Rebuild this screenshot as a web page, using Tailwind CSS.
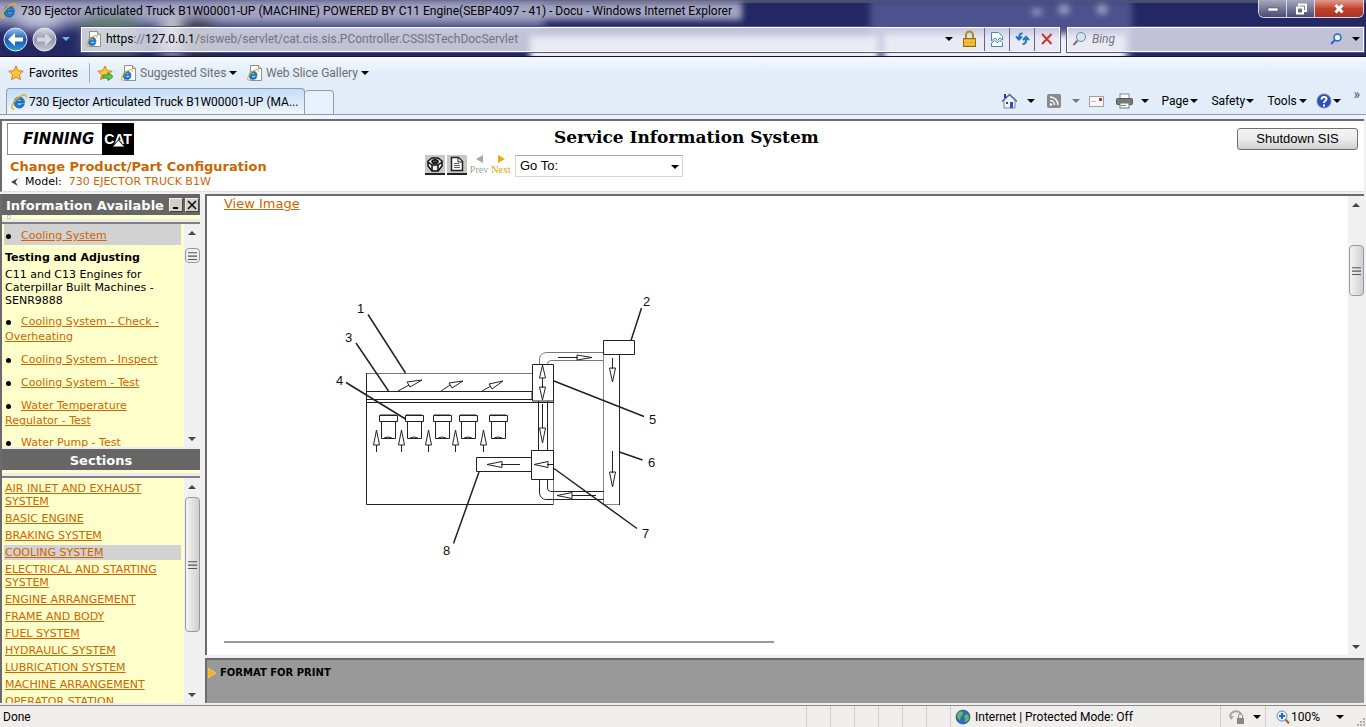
<!DOCTYPE html>
<html lang="en">
  <head>
    <meta charset="UTF-8" />
    <meta name="viewport" content="width=device-width, initial-scale=1.0" />
    <title>730 Ejector Articulated Truck - Service Information System</title>
    <script src="https://cdn.jsdelivr.net/npm/@tailwindcss/browser@4"></script>
  </head>
  <body class="h-screen flex flex-col overflow-hidden bg-[#f0f0f0] font-['Roboto',sans-serif] text-[12px] leading-4 text-black">
    <!-- Shared icons -->
    <svg class="hidden">
      <symbol id="ie" viewBox="0 0 16 16">
        <path d="M13.4 9H6.1c.2 1.500 1.200 2.300 2.500 2.300.9 0 1.600-.4 2-1.100h2.600C12.500 12.600 10.700 14 8.400 14 5.300 14 3 11.600 3 8.500S5.300 3 8.400 3s5.200 2.500 5 6zM6.200 7.300h4.400C10.400 6.100 9.600 5.400 8.400 5.400S6.400 6.100 6.200 7.300z" fill="#1c7fd0" stroke="#0d57a5" stroke-width=".8" />
        <path d="M3.200 15C1 15.500.2 13.500 1.500 10.500 3 7 7.500 2.500 12 1c2.500-.8 3.600.4 2.800 2.600" fill="none" stroke="#e8b020" stroke-width="1.500" />
      </symbol>
      <symbol id="ie-page" viewBox="0 0 16 16">
        <path d="M3.500.5h8l3 3v12h-11z" fill="#fff" stroke="#8a8f98" />
        <path d="M11.500.5v3h3" fill="#dde" stroke="#8a8f98" />
        <use href="#ie" x="0" y="4" width="12" height="12" />
      </symbol>
      <symbol id="star" viewBox="0 0 16 16">
        <path d="M8 1l2.100 4.700 5.100.5-3.800 3.500 1.100 5L8 12.100l-4.500 2.600 1.100-5L.8 6.200l5.100-.5z" fill="#fcc73a" stroke="#d58112" />
      </symbol>
      <symbol id="caret" viewBox="0 0 8 4">
        <path d="M0 0h8L4 4z" fill="currentColor" />
      </symbol>
      <symbol id="grip" viewBox="0 0 8 8">
        <path d="M0 1.500h8M0 4.500h8M0 7.500h8" stroke="#555" />
      </symbol>
      <symbol id="up" viewBox="0 0 8 4">
        <path d="M0 4L4 0l4 4z" fill="#444" />
      </symbol>
      <symbol id="down" viewBox="0 0 8 4">
        <path d="M0 0h8L4 4z" fill="#444" />
      </symbol>
    </svg>

    <!-- Window frame: title bar and address bar -->
    <header class="relative h-[57px] shrink-0 overflow-hidden bg-[#232865] border-b border-[#14142c]">
      <div class="absolute inset-0">
        <div class="absolute left-0 top-0 w-full h-[3px] bg-[#4b4f6c]"></div>
        <div class="absolute -left-4 top-[2px] w-[560px] h-[26px] bg-[#7074a4] blur-[4px]"></div>
        <div class="absolute -left-4 top-[2px] w-[758px] h-[18px] bg-[#a4a4c2] blur-[3px]"></div>
        <div class="absolute left-[20px] top-[14px] w-[40px] h-[14px] bg-[#d8d8e8] blur-sm"></div>
        <div class="absolute left-[84px] top-[18px] w-[52px] h-[36px] bg-[#5d7d68] blur-sm"></div>
        <div class="absolute left-[162px] top-[18px] w-[22px] h-[36px] bg-[#e5e5e5] blur-sm"></div>
        <div class="absolute left-[184px] top-[22px] w-[26px] h-[34px] bg-[#33332f] blur-sm"></div>
        <div class="absolute left-[870px] top-0 w-[262px] h-[60px] bg-[#4c528c] blur-[3px]"></div>
        <div class="absolute left-[530px] top-[36px] w-[348px] h-[26px] bg-[#eeeef6] blur-[3px]"></div>
        <div class="absolute left-[884px] top-[34px] w-[242px] h-[30px] bg-[#eeeef6] blur-[3px]"></div>
        <div class="absolute left-[1032px] top-[9px] w-[10px] h-[6px] bg-[#9ba0c6] blur-[3px]"></div>
        <div class="absolute left-[1059px] top-[5px] w-[10px] h-[9px] bg-[#9ba0c6] blur-[3px]"></div>
        <div class="absolute left-[1097px] top-[5px] w-[10px] h-[9px] bg-[#9ba0c6] blur-[3px]"></div>
      </div>

      <div class="relative flex h-[22px] items-center gap-1 pl-[1px] pr-[2px]">
        <svg class="size-4 shrink-0"><use href="#ie" /></svg>
        <h1 class="flex-1 whitespace-nowrap">730 Ejector Articulated Truck B1W00001-UP (MACHINE) POWERED BY C11 Engine(SEBP4097 - 41) - Docu - Windows Internet Explorer</h1>
        <div class="flex self-start h-[18px] rounded-b-md border border-t-0 border-[#d8d8e6] overflow-hidden">
          <button aria-label="Minimize" class="w-7 flex items-center justify-center border-r border-[#d8d8e6] bg-linear-to-b from-[#a8a8be] to-[#4a4c70]">
            <svg class="w-3 h-2"><rect x="1" y="3" width="10" height="3" fill="#fff" stroke="#444" stroke-width=".5" /></svg>
          </button>
          <button aria-label="Restore" class="w-7 flex items-center justify-center border-r border-[#d8d8e6] bg-linear-to-b from-[#a8a8be] to-[#4a4c70]">
            <svg class="size-3" fill="none" stroke="#fff" stroke-width="2"><path d="M4 3V1.500h7V8H9" /><rect x="2" y="4.500" width="6" height="6" /></svg>
          </button>
          <button aria-label="Close" class="w-12 flex items-center justify-center bg-linear-to-b from-[#dc9a90] via-[#c5402c] to-[#a83324]">
            <svg class="size-3"><path d="M2.500 2l7 7.500M9.500 2l-7 7.500" stroke="#fff" stroke-width="3" /></svg>
          </button>
        </div>
      </div>

      <div class="relative flex h-[34px] items-center pl-[3px] pr-[2px]">
        <button aria-label="Back">
          <svg class="size-[25px]">
            <defs>
              <linearGradient id="blue" x2="0" y2="1"><stop stop-color="#9cc4ee" /><stop offset=".5" stop-color="#1c58b0" /><stop offset="1" stop-color="#2a9be8" /></linearGradient>
              <linearGradient id="silver" x2="0" y2="1"><stop stop-color="#dcdce6" /><stop offset=".5" stop-color="#9496aa" /><stop offset="1" stop-color="#c8cad6" /></linearGradient>
            </defs>
            <circle cx="12.500" cy="12.500" r="11.500" fill="url(#blue)" stroke="#dfe6f4" />
            <path d="M5 12.500L12 6v4.500h8v4h-8V19z" fill="#fff" />
          </svg>
        </button>
        <button aria-label="Forward" class="ml-1">
          <svg class="size-[25px]">
            <circle cx="12.500" cy="12.500" r="11.500" fill="url(#silver)" stroke="#e2e2ec" />
            <path d="M20 12.500L13 6v4.500H5v4h8V19z" fill="#d4d6e2" />
          </svg>
        </button>
        <button aria-label="Recent pages" class="ml-[5px] text-[#6fb6ea]"><svg class="w-2 h-1"><use href="#caret" /></svg></button>
        <div class="ml-[11px] flex flex-1 h-[25px] items-center border border-white bg-[#e9e9f4]/80 outline outline-[#55557c]">
          <svg class="ml-1 size-4 shrink-0"><use href="#ie-page" /></svg>
          <div class="ml-1 flex-1 whitespace-nowrap text-[#73737e]"><span class="text-black">https</span>://<span class="text-black">127.0.0.1</span>/sisweb/servlet/cat.cis.sis.PController.CSSISTechDocServlet</div>
          <svg class="w-2 h-1 mr-[9px]"><use href="#caret" /></svg>
          <svg class="w-[15px] h-[18px] mr-[7px]">
            <path d="M4 9V5a3.500 3.500 0 0 1 7 0v4" fill="none" stroke="#b08a1c" stroke-width="2" />
            <rect x="1.500" y="8.500" width="12" height="8" fill="#e8a820" stroke="#9a6a10" />
            <path d="M2 11h11M2 14h11" stroke="#f8d460" />
          </svg>
          <button aria-label="Compatibility view" class="w-[25px] h-full flex items-center justify-center border-l border-[#66668a]">
            <svg class="w-3 h-[15px]" fill="#fff" stroke="#3a8fae"><path d="M.5 7V.5h7l4 3.500v4L9 6 6.500 8.500 4 6 .5 9z" /><path d="M.5 11L4 8.500 6.500 11 9 8.500l2.500 2v4H.5z" /></svg>
          </button>
          <button aria-label="Refresh" class="w-[25px] h-full flex items-center justify-center border-l border-[#66668a]">
            <svg width="15" height="14" fill="none" stroke="#2272bc" stroke-width="2"><path d="M7.500 1.500C5 1 4 3 4 6.500M1 4.500l3 3 3-3M7.500 12c3 .5 3.500-2 3.500-5M8 8l3-3 3 3" /></svg>
          </button>
          <button aria-label="Stop" class="w-[25px] h-full flex items-center justify-center border-l border-[#66668a]">
            <svg class="size-3"><path d="M1 1l9.500 10M10.500 1L1 11" stroke="#cc3434" stroke-width="2" /></svg>
          </button>
        </div>
        <div class="ml-[7px] flex w-[297px] h-[25px] items-center border border-white bg-[#e9e9f4]/80 outline outline-[#55557c]">
          <svg class="ml-1 size-4 shrink-0"><circle cx="9" cy="6" r="4.500" fill="#d4e4f4" stroke="#7888a0" /><path d="M5.500 9.500L1.500 14" stroke="#777" stroke-width="2" /></svg>
          <input type="text" aria-label="Search" placeholder="Bing" class="ml-1 min-w-0 flex-1 italic placeholder:text-[#73737e]" />
          <svg class="size-3 mr-[10px]"><circle cx="7.500" cy="4.500" r="3.500" fill="#eaf4ff" stroke="#2468b8" stroke-width="1.500" /><path d="M5 7l-4 4" stroke="#2468b8" stroke-width="2" /></svg>
          <svg class="w-2 h-1 mr-[3px]"><use href="#caret" /></svg>
        </div>
      </div>
    </header>

    <!-- Favorites bar -->
    <nav class="flex h-[31px] shrink-0 items-center bg-linear-to-b from-[#f5f9fe] to-[#e2edf9] to-50% pl-2">
      <svg class="size-4"><use href="#star" /></svg>
      <a href="#" class="ml-[5px] w-[60px]">Favorites</a>
      <span class="h-5 w-px bg-[#a4b0c0]"></span>
      <svg class="ml-[7px] w-[17px] h-4"><use href="#star" width="16" height="16" /><path d="M6 10h5V7.500l5 4-5 4V13H6z" fill="#6cc84a" stroke="#2c8a2a" /></svg>
      <svg class="ml-[7px] size-4"><use href="#ie-page" /></svg>
      <a href="#" class="ml-[3px] w-[89px] whitespace-nowrap text-[#6e6e6e]">Suggested Sites</a>
      <svg class="w-2 h-1"><use href="#caret" /></svg>
      <svg class="ml-[10px] size-4"><use href="#ie-page" /></svg>
      <a href="#" class="ml-[3px] w-[95px] whitespace-nowrap text-[#6e6e6e]">Web Slice Gallery</a>
      <svg class="w-2 h-1"><use href="#caret" /></svg>
    </nav>

    <!-- Tabs and command bar -->
    <div class="flex h-[27px] shrink-0 items-end border-b border-[#8b9cb3] bg-[#e2edf9] pl-[6px]">
      <div class="flex h-[26px] w-[299px] items-center gap-[2px] rounded-t border border-b-0 border-[#8b9cb3] bg-linear-to-b from-[#c6dcf8] to-[#eef5fd] pl-1">
        <svg class="size-4 shrink-0"><use href="#ie" /></svg>
        <span class="whitespace-nowrap">730 Ejector Articulated Truck B1W00001-UP (MA...</span>
      </div>
      <button aria-label="New tab" class="h-[24px] w-[29px] rounded-t border border-l-0 border-b-0 border-[#8b9cb3] bg-[#e8f1fb]"></button>
      <div class="ml-auto flex h-full items-center pr-[6px]">
        <svg class="size-4"><path d="M3 7v8h11V7L8.500 2z" fill="#eef2fa" stroke="#7a86a0" /><path d="M1 8.500L8.500 1.500 16 8.500" fill="none" stroke="#4a68b0" stroke-width="1.500" /><rect x="3" y="1" width="2" height="4" fill="#2038a0" /><rect x="9" y="9" width="3" height="6" fill="#3454a4" /><rect x="5" y="9" width="2" height="2" fill="#444" /></svg>
        <svg class="ml-[10px] w-2 h-1"><use href="#caret" /></svg>
        <svg class="ml-3 size-[14px]"><rect width="14" height="14" rx="2" fill="#8a8a8a" /><path d="M3 3a8 8 0 0 1 8 8M3 6.500A4.500 4.500 0 0 1 7.500 11" fill="none" stroke="#fff" stroke-width="1.500" /><circle cx="4" cy="10.500" r="1.200" fill="#fff" /></svg>
        <svg class="ml-[11px] w-2 h-1 text-[#777]"><use href="#caret" /></svg>
        <svg class="ml-[9px] w-[15px] h-[11px]"><rect x=".5" y=".5" width="14" height="10" fill="#fafafa" stroke="#a0a0a0" /><rect x="10" y="2" width="3" height="3" fill="#d03030" /><path d="M2 5.500h5" stroke="#bbb" /></svg>
        <svg class="ml-3 w-[17px] h-4"><rect x="4" y="1" width="9" height="6" fill="#fff" stroke="#888" /><rect x=".5" y="5.500" width="16" height="6" rx="1" fill="#787878" stroke="#555" /><rect x="4" y="10" width="9" height="5" fill="#fff" stroke="#777" /><path d="M5 12.500h5" stroke="#48a048" /></svg>
        <svg class="ml-2 w-2 h-1"><use href="#caret" /></svg>
        <button class="ml-3 flex w-[37px] items-center justify-between">Page<svg class="w-2 h-1 shrink-0"><use href="#caret" /></svg></button>
        <button class="ml-[13px] flex w-[43px] items-center justify-between">Safety<svg class="w-2 h-1 shrink-0"><use href="#caret" /></svg></button>
        <button class="ml-[13px] flex w-[40px] items-center justify-between">Tools<svg class="w-2 h-1 shrink-0"><use href="#caret" /></svg></button>
        <svg class="ml-[9px] size-4"><circle cx="8" cy="8" r="7" fill="#2d50b8" stroke="#7684a8" /><path d="M5.500 6.500C5.500 3 10.500 3.500 10.500 6c0 2-2.500 1.500-2.500 4M8 11.500v2" fill="none" stroke="#fff" stroke-width="2" /></svg>
        <svg class="ml-[1px] w-2 h-1"><use href="#caret" /></svg>
        <span class="ml-3 self-start text-[14px] leading-3 text-[#44587c]">»</span>
      </div>
    </div>

    <!-- Page -->
    <div class="flex min-h-0 flex-1 flex-col border-t-4 border-t-[#f0f4fa] pr-[2px] font-['DejaVu_Sans',Verdana,sans-serif]">
      <div class="flex h-[73px] shrink-0 border-t-2 border-l-2 border-[#6b6b6b] border-b border-b-[#e0e0e0] bg-white pt-[2px]">
        <div class="w-[423px] shrink-0 pl-[5px]">
          <div class="flex h-8 w-[127px] border border-[#888]">
            <span class="flex-1 pl-[15px] text-[15px] font-bold italic leading-[30px]">FINNING</span>
            <span class="relative w-8 -my-px -mr-px bg-black text-center font-['Liberation_Sans',sans-serif] text-[14px] font-bold leading-8 text-white">CAT
              <svg class="absolute left-[10px] top-[17px] w-[13px] h-[7px]"><path d="M0 7L6.500 0 13 7z" fill="#fff" stroke="#000" /></svg>
            </span>
          </div>
          <a href="#" class="block pl-[3px] pt-1 text-[13px] leading-[15px] font-bold text-[#cc6600]">Change Product/Part Configuration</a>
          <p class="flex items-center gap-[7px] pl-1 text-[11px] leading-[15px]">
            <svg class="w-[7px] h-2"><path d="M7 0L0 4l7 4-2.500-4z" fill="#444" /></svg>
            <span>Model:</span><a href="#" class="text-[#cc6600]">730 EJECTOR TRUCK B1W</a>
          </p>
        </div>
        <div class="flex-1">
          <h2 class="pl-[129px] pt-1 font-['DejaVu_Serif',serif] text-[17px] leading-5 font-bold">Service Information System</h2>
          <div class="mt-2 flex items-start">
            <button aria-label="Parts" class="size-5 border-b-2 border-[#222] bg-[#c8c8c8]">
              <svg class="size-5" fill="#eee" stroke="#111" stroke-width="1.500"><path d="M3 6l4-3h6l4 3v5l-4 5H7l-4-5z" /><path d="M3 7l4 3h6l4-3M7 10v6M13 10v6" /><ellipse cx="10" cy="6.500" rx="3" ry="1.800" fill="#555" /></svg>
            </button>
            <button aria-label="Document" class="ml-[2px] size-5 border-b-2 border-[#222] bg-[#c8c8c8]">
              <svg class="size-5" fill="#fff" stroke="#222"><path d="M4.500 2.500h7l4 4v9h-11z" stroke-width="1.500" /><path d="M11 3v4h4" /><path d="M7 8.500h5M7 10.500h6M7 12.500h6" stroke="#5050b0" /></svg>
            </button>
            <a href="#" class="ml-[2px] flex w-5 flex-col items-center font-['Liberation_Serif',serif] text-[10px] leading-3 text-[#a0a0a0]">
              <svg class="w-[7px] h-[9px]"><path d="M7 0v8L0 4z" fill="#a8a8a8" /></svg>Prev</a>
            <a href="#" class="ml-[2px] flex w-5 flex-col items-center font-['Liberation_Serif',serif] text-[10px] leading-3 text-[#e8a000]">
              <svg class="w-[7px] h-[9px]"><path d="M0 0v8l7-4z" fill="#f0a800" /></svg>Next</a>
            <div class="relative ml-1">
              <select aria-label="Go To" class="h-[22px] w-[168px] appearance-none border border-[#d4d4d4] border-t-[#aaa] bg-white pl-1 font-['Liberation_Sans',sans-serif] text-[13px] leading-5">
                <option>Go To:</option>
              </select>
              <svg class="pointer-events-none absolute right-1 top-[10px] w-2 h-1"><use href="#caret" /></svg>
            </div>
          </div>
        </div>
        <button class="mr-[6px] mt-[5px] h-[22px] w-[121px] rounded-[3px] border border-[#707070] bg-linear-to-b from-[#f4f4f4] via-[#ebebeb] to-[#cfcfcf] font-['Liberation_Sans',sans-serif] text-[13px]">Shutdown SIS</button>
      </div>

      <div class="mt-[2px] flex min-h-0 flex-1">
        <!-- Side panels -->
        <aside class="flex w-[200px] shrink-0 flex-col border-l-2 border-[#6b6b6b] bg-[#ffffcc]">
          <div class="flex h-[21px] shrink-0 items-center bg-[#666] pl-1 text-[13px] font-bold text-white">
            <h3 class="flex-1 whitespace-nowrap pt-[2px]">Information Available</h3>
            <button aria-label="Collapse" class="size-[14px] border border-[#eee] border-r-[#444] border-b-[#444] bg-[#d4d0c8]"><svg class="size-3"><path d="M3 9h5" stroke="#000" stroke-width="2" /></svg></button>
            <button aria-label="Close panel" class="ml-[2px] mr-px size-[14px] border border-[#eee] border-r-[#444] border-b-[#444] bg-[#d4d0c8]"><svg class="size-3"><path d="M2 2l8 8M10 2l-8 8" stroke="#000" stroke-width="1.500" /></svg></button>
          </div>
          <div class="h-[7px] shrink-0 border-b-[3px] border-[#ececec] pl-[5px]"><div class="size-1 border border-[#ccc] bg-white"></div></div>
          <div class="flex h-[225px] shrink-0 border-t-2 border-[#808080]">
            <div class="min-w-0 flex-1 overflow-hidden pl-[2px] pr-[3px] text-[11px] leading-[15px]">
              <p class="mb-[6px] bg-[#d2d2d2] pt-1 pb-[2px] pl-px"><span class="ml-px mr-[10px] inline-block size-[5px] rounded-full bg-black align-middle"></span><a href="#" class="text-[#cc6600] underline">Cooling System</a></p>
              <div class="pl-px">
                <h4 class="font-bold leading-[13px]">Testing and Adjusting</h4>
                <p class="mt-1 leading-[13px]">C11 and C13 Engines for<br />Caterpillar Built Machines -<br />SENR9888</p>
                <ul class="mt-[7px] flex flex-col gap-2 text-[#cc6600]">
                  <li><span class="ml-px mr-[10px] inline-block size-[5px] rounded-full bg-black align-middle"></span><a href="#" class="underline">Cooling System - Check -<br />Overheating</a></li>
                  <li><span class="ml-px mr-[10px] inline-block size-[5px] rounded-full bg-black align-middle"></span><a href="#" class="underline">Cooling System - Inspect</a></li>
                  <li><span class="ml-px mr-[10px] inline-block size-[5px] rounded-full bg-black align-middle"></span><a href="#" class="underline">Cooling System - Test</a></li>
                  <li><span class="ml-px mr-[10px] inline-block size-[5px] rounded-full bg-black align-middle"></span><a href="#" class="underline">Water Temperature<br />Regulator - Test</a></li>
                  <li class="-mt-px"><span class="ml-px mr-[10px] inline-block size-[5px] rounded-full bg-black align-middle"></span><a href="#" class="underline">Water Pump - Test</a></li>
                </ul>
              </div>
            </div>
            <div class="flex w-4 shrink-0 flex-col items-center bg-[#f0f0f0]">
              <svg class="mt-[7px] w-2 h-1"><use href="#up" /></svg>
              <div class="mt-[13px] flex h-[15px] w-[15px] items-center justify-center rounded-sm border border-[#999] bg-[#eee]"><svg class="size-[9px]"><use href="#grip" /></svg></div>
              <svg class="mt-auto mb-[6px] w-2 h-1"><use href="#down" /></svg>
            </div>
          </div>
          <h3 class="h-[23px] shrink-0 border-t-2 border-[#ececec] bg-[#666] text-center text-[13px] font-bold leading-6 text-white">Sections</h3>
          <div class="h-[6px] shrink-0 border-b-[3px] border-[#ececec]"></div>
          <div class="flex min-h-0 flex-1 border-t-2 border-[#808080]">
            <ul class="flex min-w-0 flex-1 flex-col gap-[2px] overflow-hidden pl-[2px] pr-[3px] pt-[3px] text-[11px] leading-[13px] text-[#cc6600]">
              <li class="py-px pl-px"><a href="#" class="underline">AIR INLET AND EXHAUST<br />SYSTEM</a></li>
              <li class="py-px pl-px"><a href="#" class="underline">BASIC ENGINE</a></li>
              <li class="py-px pl-px"><a href="#" class="underline">BRAKING SYSTEM</a></li>
              <li class="bg-[#d2d2d2] py-px pl-px"><a href="#" class="underline">COOLING SYSTEM</a></li>
              <li class="py-px pl-px"><a href="#" class="underline">ELECTRICAL AND STARTING<br />SYSTEM</a></li>
              <li class="py-px pl-px"><a href="#" class="underline">ENGINE ARRANGEMENT</a></li>
              <li class="py-px pl-px"><a href="#" class="underline">FRAME AND BODY</a></li>
              <li class="py-px pl-px"><a href="#" class="underline">FUEL SYSTEM</a></li>
              <li class="py-px pl-px"><a href="#" class="underline">HYDRAULIC SYSTEM</a></li>
              <li class="py-px pl-px"><a href="#" class="underline">LUBRICATION SYSTEM</a></li>
              <li class="py-px pl-px"><a href="#" class="underline">MACHINE ARRANGEMENT</a></li>
              <li class="py-px pl-px"><a href="#" class="underline">OPERATOR STATION</a></li>
            </ul>
            <div class="flex w-4 shrink-0 flex-col items-center bg-[#f0f0f0]">
              <svg class="mt-[7px] w-2 h-1"><use href="#up" /></svg>
              <div class="mt-2 flex h-[135px] w-[15px] items-center justify-center rounded-sm border border-[#999] bg-linear-to-r from-[#f4f4f4] to-[#cfcfd4]"><svg class="size-[9px]"><use href="#grip" /></svg></div>
              <svg class="mt-auto mb-[6px] w-2 h-1"><use href="#down" /></svg>
            </div>
          </div>
        </aside>

        <!-- Document -->
        <div class="ml-[5px] flex min-w-0 flex-1 flex-col">
          <main class="flex min-h-0 flex-1 border-t-2 border-l-2 border-[#6b6b6b] bg-white">
            <div class="min-w-0 flex-1 overflow-hidden pl-[17px]">
              <a href="#" class="block text-[13px] leading-[15px] text-[#cc6600] underline">View Image</a>
              <svg class="mt-[69px] ml-24 block" width="350" height="290" viewBox="320 280 350 290" fill="none" stroke="#222">
                <!-- Engine block and manifold -->
                <path d="M366.500 373.500H532M553.500 401v103" stroke="#777" />
                <path d="M366.500 373v131.500h187M366.500 391.500h165.500v8.500M366.500 399.500H532M366.500 402.500H554" />
                <!-- Upper line to radiator -->
                <path d="M539.500 364v-4q0-7 7-7.500H604M547.500 364q0-3 3-3.500H604" stroke="#777" />
                <path d="M532.500 364.500h21v36.500h-21zM538.500 401v49M547.500 401v49" />
                <path d="M603.500 355v149.500h16" stroke="#888" />
                <path d="M603.500 340.500h31v14h-31zM619.500 355v150" />
                <!-- Pump and lower line -->
                <path d="M531.500 450.500h22v29h-22zM531.500 457.500h-55v14h55M539.500 480v13q1 6 6 6.500H604M547.500 480v8q0 3 3 3.500H604" />
                <!-- Cylinders -->
                <g id="cylinders">
                  <path d="M379.500 415.500h18v6h-18zM381.500 422v16.500h14V422M384 438q4-2 8 0M380 415h16" />
                  <path d="M405.500 415.500h18v6h-18zM407.500 422v16.500h14V422M410 438q4-2 8 0M406 415h16" />
                  <path d="M433.500 415.500h18v6h-18zM435.500 422v16.500h14V422M438 438q4-2 8 0M434 415h16" />
                  <path d="M459.500 415.500h18v6h-18zM461.500 422v16.500h14V422M464 438q4-2 8 0M460 415h16" />
                  <path d="M489.500 415.500h18v6h-18zM491.500 422v16.500h14V422M494 438q4-2 8 0M490 415h16" />
                </g>
                <!-- Flow arrows -->
                <g fill="#fff">
                  <path d="M376.500 452v-7M376.500 430l-3 15h6zM401.500 452v-7M401.500 430l-3 15h6zM428.500 452v-7M428.500 430l-3 15h6zM455.500 452v-7M455.500 430l-3 15h6zM483.500 452v-7M483.500 430l-3 15h6z" />
                  <path d="M398 391l11-6M422 380l-15 2 3 5zM441 391l9-6M463 381l-14 2 3 5zM482 391l9-5M503 381l-14 3 3 5z" />
                  <path d="M558 357.500h20M592 357.500l-15-2.500v5zM612.500 358v11M612.500 382l-3-14h6zM612.500 451v22M612.500 487l-3-15h6z" />
                  <path d="M542.500 378v10M542.500 365l-3 13h6zM542.500 400l-3-13h6zM542.500 404v24M542.500 443l-3-15h6z" />
                  <path d="M520 464.500h-19M487 464.500l15-3v6zM553 464.500h-6M534 464.500l14-3v6zM596 495.500h-24M557 495.500l15-3v6z" />
                </g>
                <!-- Callout leaders -->
                <path d="M368 314.500L405.500 373M356 343l32.500 48M346 382.500L405.500 419M641.500 308L631 340.500M554 381l90 35.500M619.500 452l23 8M554 468.500l83 60M479 472l-25.500 71.500" stroke-width="1.500" />
                <g fill="#111" stroke="none" font-family="Liberation Sans, sans-serif" font-size="13">
                  <text x="357" y="313">1</text>
                  <text x="643" y="306">2</text>
                  <text x="345" y="342">3</text>
                  <text x="336" y="385">4</text>
                  <text x="649" y="424">5</text>
                  <text x="648" y="467">6</text>
                  <text x="642" y="538">7</text>
                  <text x="443" y="555">8</text>
                </g>
              </svg>
              <hr class="mt-[71px] w-[550px] border-t-2 border-[#999]" />
            </div>
            <div class="flex w-4 shrink-0 flex-col items-center bg-[#f0f0f0]">
              <svg class="mt-[7px] w-2 h-1"><use href="#up" /></svg>
              <div class="mt-[38px] flex h-[51px] w-[15px] items-center justify-center rounded-sm border border-[#999] bg-linear-to-r from-[#f4f4f4] to-[#cfcfd4]"><svg class="size-[9px]"><use href="#grip" /></svg></div>
              <svg class="mt-auto mb-[6px] w-2 h-1"><use href="#down" /></svg>
            </div>
          </main>
          <footer class="mt-[3px] h-[45px] shrink-0 border-t-2 border-l-2 border-[#6b6b6b] bg-[#999]">
            <a href="#" class="flex items-center gap-1 pl-px pt-[5px] text-[10px] font-bold"><svg class="w-2 h-[10px]"><path d="M0 0v10l8-5z" fill="#f5b21c" stroke="#ffe3a0" stroke-width=".5" /></svg>FORMAT FOR PRINT</a>
          </footer>
        </div>
      </div>
    </div>

    <!-- Status bar -->
    <div class="mt-[2px] flex h-[22px] shrink-0 items-center border-t border-[#888] bg-[#f0eded]">
      <span class="flex-1 pl-[3px]">Done</span>
      <div class="flex h-full items-center divide-x divide-[#d2cfcf] border-l border-[#d2cfcf]">
        <span class="h-full w-6"></span><span class="h-full w-6"></span><span class="h-full w-6"></span>
        <span class="h-full w-6"></span><span class="h-full w-6"></span><span class="h-full w-6"></span>
        <span class="flex h-full w-[270px] items-center gap-1 whitespace-nowrap pl-1">
          <svg class="size-4"><circle cx="8" cy="8" r="7" fill="#2a6fc4" stroke="#2a4a80" stroke-width=".7" /><path d="M3 4c3-3 6-1 5 1S5 8 5 11C3 10 1 7 3 4zM10 6c2-2 4 0 4 3s-3 4-4 4 1-3 0-4-1-2 0-3z" fill="#6cba50" /></svg>
          Internet | Protected Mode: Off
        </span>
        <span class="flex h-full w-[45px] items-center gap-2 pl-2">
          <svg class="size-4"><path d="M1 8A6 6 0 0 1 12 5" fill="none" stroke="#a8a8a8" stroke-width="2" /><path d="M0 7l2 4 3-4z" fill="#a8a8a8" /><rect x="8" y="9" width="7" height="6" fill="#888" /><path d="M9.500 9V7a2 2 0 0 1 4 0v2" fill="none" stroke="#888" /></svg>
          <svg class="w-2 h-1"><use href="#caret" /></svg>
        </span>
        <span class="flex h-full w-[100px] items-center pl-[10px]">
          <svg class="size-[14px]"><circle cx="6" cy="6" r="5" fill="#e4f0fc" stroke="#6a8cb8" /><path d="M6 3v6M3 6h6" stroke="#2468c0" stroke-width="2" /><path d="M9.500 9.500l3.500 4" stroke="#9a6a30" stroke-width="2" /></svg>
          <span class="ml-px w-[45px]">100%</span>
          <svg class="w-2 h-1"><use href="#caret" /></svg>
          <svg class="ml-auto mr-px size-[10px] self-end"><path d="M8 2h2M5 5h2M8 5h2M2 8h2M5 8h2M8 8h2" stroke="#b4b0b0" stroke-width="2" /></svg>
        </span>
      </div>
    </div>
  </body>
</html>
